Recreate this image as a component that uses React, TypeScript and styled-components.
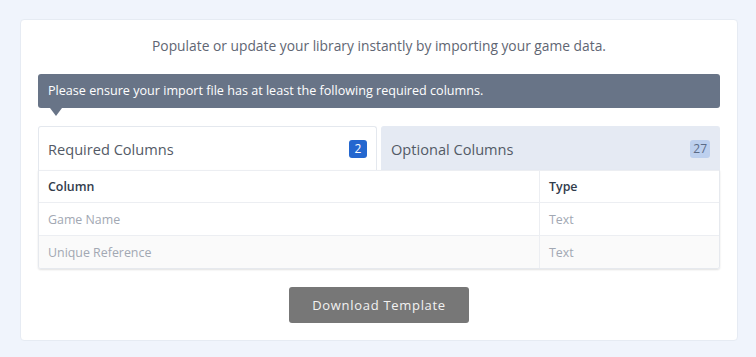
import React, { useState } from "react";
import styled, { createGlobalStyle } from "styled-components";

const GlobalStyle = createGlobalStyle`
  html, body {
    margin: 0;
    padding: 0;
    background: #f0f4fc;
    font-family: "Open Sans", "Noto Sans", sans-serif;
  }
  * { box-sizing: border-box; }
`;

const Page = styled.div`
  padding: 19px 18px 16px 20px;
`;

const Card = styled.div`
  background: #fff;
  border: 1px solid #e6ebf3;
  border-radius: 4px;
  padding: 14px 17px 17px 17px;
  display: flex;
  flex-direction: column;
`;

const Intro = styled.p`
  margin: 0;
  text-align: center;
  font-size: 13.8px;
  line-height: 24px;
  color: #5f6673;
`;

const Notice = styled.div`
  position: relative;
  margin-top: 16px;
  background: #687487;
  color: #fff;
  font-size: 12.6px;
  line-height: 34px;
  height: 34px;
  padding: 0 10px;
  border-radius: 3px;

  &::after {
    content: "";
    position: absolute;
    left: 12px;
    bottom: -8px;
    border-left: 6px solid transparent;
    border-right: 6px solid transparent;
    border-top: 8px solid #687487;
  }
`;

const Tabs = styled.div`
  margin-top: 18px;
  display: flex;
  gap: 4px;
`;

const Tab = styled.button<{ $active: boolean }>`
  flex: 1;
  height: 44px;
  display: flex;
  align-items: center;
  justify-content: space-between;
  padding: 0 9px 0 9px;
  font-family: inherit;
  font-size: 14.6px;
  color: #535a66;
  cursor: pointer;
  border: 1px solid ${(p) => (p.$active ? "#e4e8ee" : "#e5eaf3")};
  border-bottom: none;
  border-radius: 3px 3px 0 0;
  background: ${(p) => (p.$active ? "#fff" : "#e5eaf3")};
`;

const Badge = styled.span<{ $active: boolean }>`
  min-width: 18px;
  height: 18px;
  padding: 0 3px;
  border-radius: 3px;
  font-size: 12px;
  line-height: 18px;
  text-align: center;
  background: ${(p) => (p.$active ? "#2467cf" : "#bdd0ee")};
  color: ${(p) => (p.$active ? "#fff" : "#5b6b86")};
`;

const Table = styled.div`
  border: 1px solid #e6e9ee;
  border-top: none;
  border-radius: 0 0 3px 3px;
  box-shadow: 0 1px 2px rgba(0, 0, 0, 0.12);
  overflow: hidden;
`;

const Row = styled.div<{ $striped?: boolean }>`
  display: grid;
  grid-template-columns: 500px 1fr;
  height: 33px;
  background: ${(p) => (p.$striped ? "#fafafa" : "#fff")};
  border-top: 1px solid #eceef2;

  &:first-child {
    height: 32px;
  }
`;

const Cell = styled.div<{ $head?: boolean }>`
  display: flex;
  align-items: center;
  padding: 0 9px;
  font-size: 12.4px;
  color: ${(p) => (p.$head ? "#323c4c" : "#a2a8b3")};
  font-weight: ${(p) => (p.$head ? 600 : 400)};

  & + & {
    border-left: 1px solid #eceef2;
  }
`;

const Footer = styled.div`
  display: flex;
  justify-content: center;
  margin-top: 18px;
`;

const Button = styled.button`
  width: 180px;
  height: 36px;
  border: none;
  border-radius: 3px;
  background: #777;
  color: #f2f2f2;
  font-family: inherit;
  font-size: 13px;
  letter-spacing: 0.7px;
  cursor: pointer;
`;

const required = [
  { name: "Game Name", type: "Text" },
  { name: "Unique Reference", type: "Text" },
];

export default function App() {
  const [tab, setTab] = useState<"required" | "optional">("required");
  return (
    <Page>
      <GlobalStyle />
      <Card>
        <Intro>Populate or update your library instantly by importing your game data.</Intro>
        <Notice>Please ensure your import file has at least the following required columns.</Notice>
        <Tabs>
          <Tab $active={tab === "required"} onClick={() => setTab("required")}>
            Required Columns
            <Badge $active={tab === "required"}>2</Badge>
          </Tab>
          <Tab $active={tab === "optional"} onClick={() => setTab("optional")}>
            Optional Columns
            <Badge $active={tab === "optional"}>27</Badge>
          </Tab>
        </Tabs>
        <Table>
          <Row>
            <Cell $head>Column</Cell>
            <Cell $head>Type</Cell>
          </Row>
          {required.map((r, i) => (
            <Row key={r.name} $striped={i % 2 === 1}>
              <Cell>{r.name}</Cell>
              <Cell>{r.type}</Cell>
            </Row>
          ))}
        </Table>
        <Footer>
          <Button>Download Template</Button>
        </Footer>
      </Card>
    </Page>
  );
}
